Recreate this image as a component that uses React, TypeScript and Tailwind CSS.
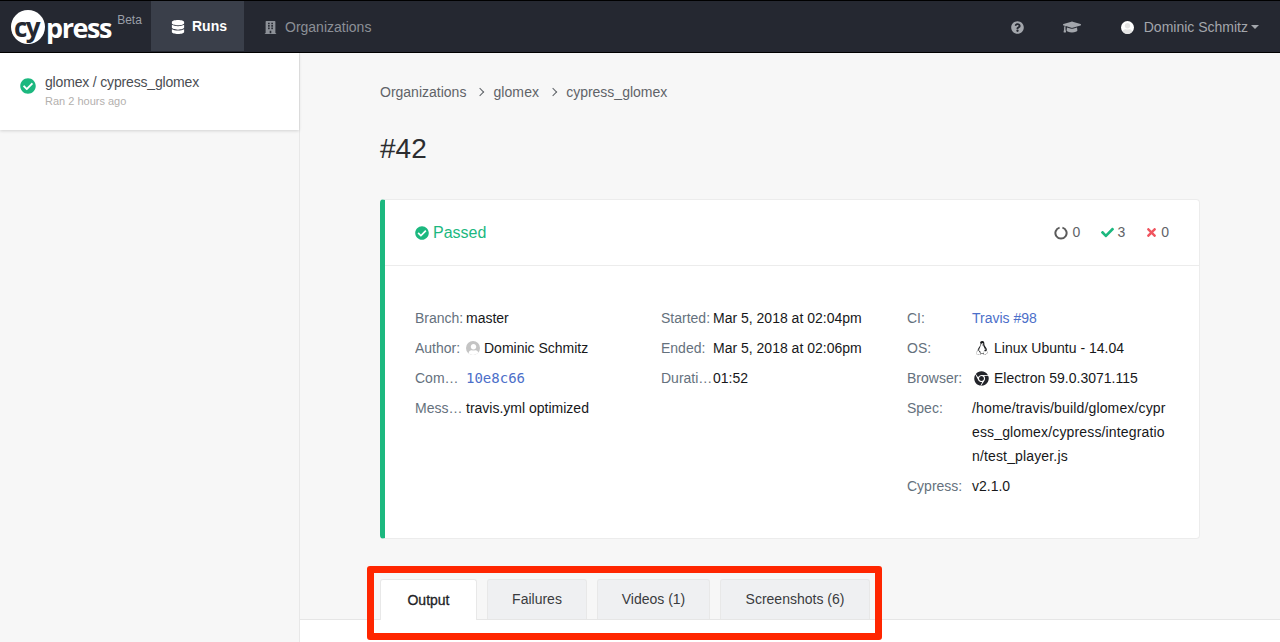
import React from "react";
import {
  FaBuilding,
  FaCheck,
  FaCheckCircle,
  FaChrome,
  FaDatabase,
  FaGraduationCap,
  FaLinux,
  FaQuestionCircle,
  FaTimes,
  FaUser,
} from "react-icons/fa";

const Label = ({ width, children }: { width: string; children: React.ReactNode }) => (
  <span className={`${width} shrink-0 text-[#65717d] truncate`}>{children}</span>
);

const Avatar = () => (
  <span className="w-[14px] h-[14px] rounded-full bg-[#c4c4c4] overflow-hidden flex items-end justify-center">
    <FaUser className="text-white text-[11px]" />
  </span>
);

const Row = ({ children }: { children: React.ReactNode }) => (
  <div className="flex items-center h-[30px] text-[#17181a]">{children}</div>
);

export default function App() {
  return (
    <div className="relative h-[642px] w-[1280px] overflow-hidden bg-[#f7f7f7] text-[14px] font-['Liberation_Sans',Arial,sans-serif]">
      {/* Navbar */}
      <div className="flex h-[53px] border-t border-b border-black bg-[#252831]">
        <div className="flex w-[151px] items-start pl-[11px]">
          <div className="mt-[9px] flex items-center">
            <span className="flex h-[34px] w-[34px] items-center justify-start rounded-full bg-white pl-[3px] font-['Open_Sans',sans-serif] text-[26px] font-bold leading-none tracking-[-1.5px] text-[#252831]">
              cy
            </span>
            <span className="ml-[1px] font-['Open_Sans',sans-serif] text-[27px] font-bold leading-none tracking-[-1.4px] text-white">
              press
            </span>
          </div>
          <span className="ml-[6px] mt-[13px] text-[12px] leading-none text-[#9a9fa8]">Beta</span>
        </div>
        <div className="flex h-[50px] w-[93px] items-center gap-[7px] bg-[#3a3f4a] pl-[20px] pt-[1px] font-bold text-white">
          <FaDatabase className="text-[14px]" />
          <span>Runs</span>
        </div>
        <div className="flex items-center gap-[8px] pl-[20px] pt-[1px] text-[#8c9097]">
          <FaBuilding className="text-[13px]" />
          <span>Organizations</span>
        </div>
        <div className="ml-auto flex items-center pr-[21px] pt-[1px] text-[#a3a6ac]">
          <FaQuestionCircle className="text-[13px]" />
          <FaGraduationCap className="ml-[39px] text-[18px]" />
          <span className="ml-[40px] flex h-[13px] w-[13px] items-end justify-center overflow-hidden rounded-full bg-white">
            <FaUser className="text-[11px] text-[#e4e4e4]" />
          </span>
          <span className="ml-[10px]">Dominic Schmitz</span>
          <span className="ml-[3px] h-0 w-0 border-x-[4px] border-t-[4px] border-x-transparent border-t-[#a3a6ac]" />
        </div>
      </div>

      <div className="flex">
        {/* Sidebar */}
        <div className="h-[589px] w-[300px] shrink-0 border-r border-[#e8e8e8]">
          <div className="flex h-[77px] bg-white pl-[20px] pt-[20px] shadow-[0_1px_3px_rgba(0,0,0,0.15)]">
            <FaCheckCircle className="mt-[5px] text-[16px] text-[#1cb87f]" />
            <div className="ml-[9px]">
              <div className="leading-[18px] tracking-[-0.17px] text-[#4a4d52]">glomex / cypress_glomex</div>
              <div className="mt-[2px] text-[11px] leading-[16px] text-[#b3b0ae]">Ran 2 hours ago</div>
            </div>
          </div>
        </div>

        {/* Main */}
        <div className="flex-1">
          <div className="pl-[80px] pr-[80px]">
            <div className="flex h-[20px] mt-[29px] items-center text-[#5f6368]">
              <span>Organizations</span>
              <span className="mx-[11px] h-[6px] w-[6px] rotate-45 border-r border-t border-[#5f6368]" />
              <span className="-ml-[1px] tracking-[0.1px]">glomex</span>
              <span className="mx-[11px] h-[6px] w-[6px] rotate-45 border-r border-t border-[#5f6368]" />
              <span className="-ml-[1px]">cypress_glomex</span>
            </div>
            <h1 className="mt-[29px] text-[28px] leading-[36px] text-[#2c2d30]">#42</h1>

            {/* Run card */}
            <div className="mt-[32px] h-[340px] overflow-hidden rounded-[4px] border border-l-[5px] border-[#ececec] border-l-[#1cb87f] bg-white">
              <div className="flex h-[66px] items-center border-b border-[#ececec] pl-[30px] pr-[30px]">
                <FaCheckCircle className="text-[14px] text-[#1cb87f]" />
                <span className="ml-[4px] text-[16px] text-[#1cb87f]">Passed</span>
                <div className="ml-auto flex items-center text-[#5f6368]">
                  <svg viewBox="0 0 14 14" className="h-[14px] w-[14px]" fill="none" stroke="#5a5a5a" strokeWidth="2">
                    <path d="M5.6 1.6 A5.6 5.6 0 1 0 8.4 1.6" />
                  </svg>
                  <span className="ml-[5px]">0</span>
                  <FaCheck className="ml-[21px] text-[13px] text-[#1cb87f]" />
                  <span className="ml-[3px]">3</span>
                  <FaTimes className="ml-[20px] text-[13px] text-[#f0555f]" />
                  <span className="ml-[3px]">0</span>
                </div>
              </div>
              <div className="flex pl-[30px] pt-[37px]">
                <div className="w-[246px]">
                  <Row>
                    <Label width="w-[51px]">Branch:</Label>
                    <span>master</span>
                  </Row>
                  <Row>
                    <Label width="w-[51px]">Author:</Label>
                    <Avatar />
                    <span className="ml-[4px]">Dominic Schmitz</span>
                  </Row>
                  <Row>
                    <Label width="w-[51px]">Com…</Label>
                    <span className="font-['DejaVu_Sans_Mono',monospace] text-[#4c6fc9]">10e8c66</span>
                  </Row>
                  <Row>
                    <Label width="w-[51px]">Mess…</Label>
                    <span>travis.yml optimized</span>
                  </Row>
                </div>
                <div className="w-[246px]">
                  <Row>
                    <Label width="w-[52px]">Started:</Label>
                    <span>Mar 5, 2018 at 02:04pm</span>
                  </Row>
                  <Row>
                    <Label width="w-[52px]">Ended:</Label>
                    <span>Mar 5, 2018 at 02:06pm</span>
                  </Row>
                  <Row>
                    <Label width="w-[52px]">Durati…</Label>
                    <span>01:52</span>
                  </Row>
                </div>
                <div className="flex-1">
                  <Row>
                    <Label width="w-[65px]">CI:</Label>
                    <span className="text-[#4c6fc9]">Travis #98</span>
                  </Row>
                  <Row>
                    <Label width="w-[65px]">OS:</Label>
                    <FaLinux className="ml-[3px] text-[14px]" />
                    <span className="ml-[5px]">Linux Ubuntu - 14.04</span>
                  </Row>
                  <Row>
                    <Label width="w-[65px]">Browser:</Label>
                    <FaChrome className="ml-[2px] text-[15px] text-[#22242a]" />
                    <span className="ml-[5px]">Electron 59.0.3071.115</span>
                  </Row>
                  <div className="flex pt-[3px] leading-[24px] text-[#17181a]">
                    <Label width="w-[65px]">Spec:</Label>
                    <span className="w-[198px] break-all tracking-[0.15px]">
                      /home/travis/build/glomex/cypress_glomex/cypress/integration/test_player.js
                    </span>
                  </div>
                  <div className="mt-[3px]">
                    <Row>
                      <Label width="w-[65px]">Cypress:</Label>
                      <span>v2.1.0</span>
                    </Row>
                  </div>
                </div>
              </div>
            </div>
          </div>

          {/* Tabs */}
          <div className="mt-[40px] flex h-[41px] gap-[10px] border-b border-[#e6e6e6] pl-[80px] text-[#3a3b3e]">
            <div className="flex h-[41px] w-[97px] items-center justify-center rounded-t-[3px] border border-b-0 border-[#e8e8e8] bg-white text-[#222326]">
              <span className="mt-[1px] [-webkit-text-stroke:0.3px]">Output</span>
            </div>
            <div className="flex h-[40px] w-[100px] items-center justify-center rounded-t-[3px] border border-b-0 border-[#e8e8e8] bg-[#eff0f2]">
              Failures
            </div>
            <div className="flex h-[40px] w-[113px] items-center justify-center rounded-t-[3px] border border-b-0 border-[#e8e8e8] bg-[#eff0f2]">
              Videos (1)
            </div>
            <div className="flex h-[40px] w-[150px] items-center justify-center rounded-t-[3px] border border-b-0 border-[#e8e8e8] bg-[#eff0f2]">
              Screenshots (6)
            </div>
          </div>
          <div className="h-[40px] bg-white" />
        </div>
      </div>

      {/* Annotation box drawn on top of the screenshot */}
      <div className="pointer-events-none absolute left-[367px] top-[566px] h-[74px] w-[515px] rounded-[3px] border-[7px] border-[#ff2600]" />
    </div>
  );
}
